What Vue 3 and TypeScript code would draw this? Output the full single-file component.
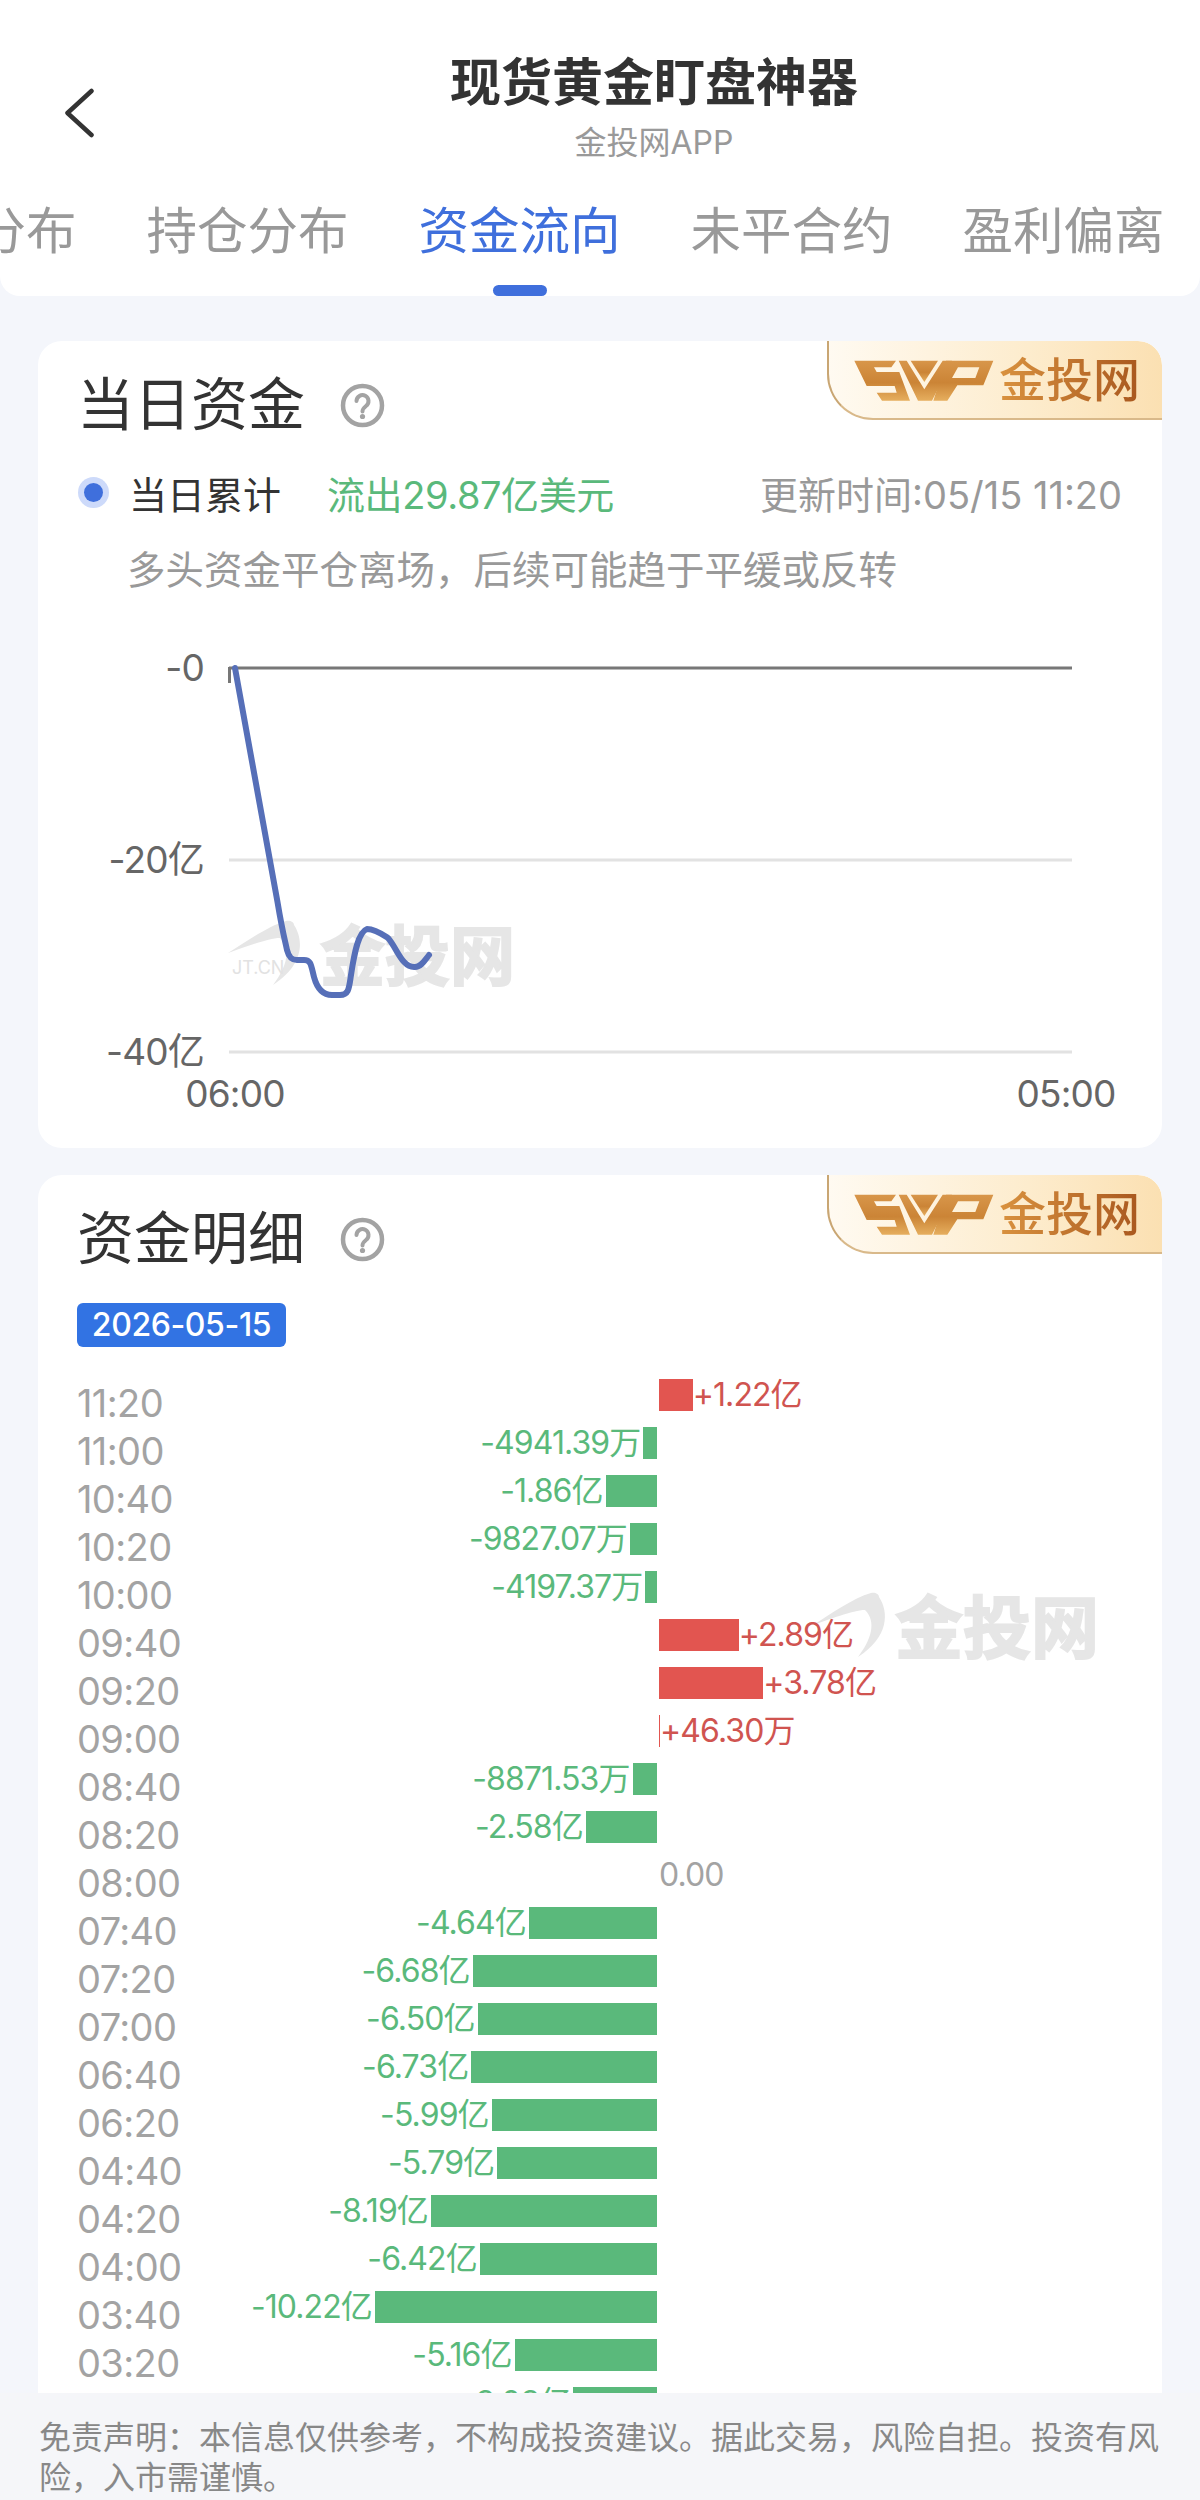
<template>
  <div class="page">
    <header class="top">
      <div class="nav">
        <svg class="nav__back" width="30" height="50" viewBox="0 0 30 50" fill="none">
          <path d="M27 3 L3 25 L27 47" stroke="#333" stroke-width="4.5" stroke-linecap="round" stroke-linejoin="round" />
        </svg>
        <div class="nav__center">
          <h1 class="nav__title">现货黄金盯盘神器</h1>
          <p class="nav__sub">金投网APP</p>
        </div>
      </div>
      <div class="tabs">
        <div v-for="tab in tabs" :key="tab" class="tab" :class="{ 'tab--active': tab === activeTab }">
          <span class="tab__text">{{ tab }}</span>
          <i class="tab__bar"></i>
        </div>
      </div>
    </header>

    <main class="scroller">
      <section class="card card--today">
        <div class="card__head">
          <h2 class="card__title">当日资金</h2>
          <svg class="help" width="45" height="45" viewBox="0 0 45 45" fill="none">
            <circle cx="22.5" cy="22.5" r="19.5" stroke="#a3a3a3" stroke-width="4.5" />
            <path d="M16.5 18a6 6 0 1 1 9.5 5c-2.3 1.8-3.5 2.8-3.5 5.5" stroke="#a3a3a3" stroke-width="4" stroke-linecap="round" />
            <circle cx="22.5" cy="33.5" r="2.6" fill="#a3a3a3" />
          </svg>
        </div>
        <div class="badge">
          <svg class="badge__logo" width="150" height="60" viewBox="0 0 450 180">
            <defs>
              <linearGradient id="svp" x1="0" y1="0" x2="0" y2="1">
                <stop offset="0" stop-color="#d8964a" />
                <stop offset="0.55" stop-color="#cb8436" />
                <stop offset="1" stop-color="#e6ae5e" />
              </linearGradient>
            </defs>
            <path fill="url(#svp)" d="M25 32H150L136 52H84L92 66H160L192 152H108L92 128H152L146 108H62Z" />
            <path fill="url(#svp)" d="M158 32H182L235 118L290 32H318L258 152H216Z" />
            <path fill="url(#svp)" d="M194 32H276L235 96Z" />
            <path fill="url(#svp)" fill-rule="evenodd" d="M300 32H442L412 106H334L304 152H262ZM336 52L318 84H388L400 52Z" />
          </svg>
          <span class="badge__text">金投网</span>
        </div>
        <div class="legend">
          <span class="legend__radio"><i></i></span>
          <span class="legend__name">当日累计</span>
          <span class="legend__flow">流出29.87亿美元</span>
          <span class="legend__time">更新时间:05/15 11:20</span>
        </div>
        <p class="desc">{{ descText }}</p>
        <svg class="chart" width="1124" height="553" viewBox="38 595 1124 553">
          <g fill="#e6e6e6">
            <path d="M228 953C246 942 268 926 286 921C290 920 294 922 294 925C304 940 304 965 273 985C286 968 292 950 280 938C268 938 243 948 228 953Z" />
            <text x="232" y="974" font-size="18" fill="#e2e2e2">JT.CN</text>
            <text x="320" y="980" font-size="65" font-weight="700" stroke="#e6e6e6" stroke-width="2">金投网</text>
          </g>
          <line
            v-for="g in yTicks"
            :key="g.label"
            x1="229"
            x2="1072"
            :y1="g.y"
            :y2="g.y"
            :stroke="g.y === 668 ? '#777' : '#e2e2e2'"
            stroke-width="3"
          />
          <line x1="229.5" x2="229.5" y1="667" y2="683" stroke="#777" stroke-width="3" />
          <text v-for="g in yTicks" :key="g.label" class="chart__label" x="204" :y="g.y + 13" text-anchor="end">{{ g.label }}</text>
          <text class="chart__label" x="235" y="1107" text-anchor="middle">06:00</text>
          <text class="chart__label" x="1066" y="1107" text-anchor="middle">05:00</text>
          <path :d="linePath" fill="none" stroke="#566fb8" stroke-width="6" stroke-linecap="round" stroke-linejoin="round" />
        </svg>
      </section>

      <section class="card card--detail">
        <div class="card__head">
          <h2 class="card__title">资金明细</h2>
          <svg class="help" width="45" height="45" viewBox="0 0 45 45" fill="none">
            <circle cx="22.5" cy="22.5" r="19.5" stroke="#a3a3a3" stroke-width="4.5" />
            <path d="M16.5 18a6 6 0 1 1 9.5 5c-2.3 1.8-3.5 2.8-3.5 5.5" stroke="#a3a3a3" stroke-width="4" stroke-linecap="round" />
            <circle cx="22.5" cy="33.5" r="2.6" fill="#a3a3a3" />
          </svg>
        </div>
        <div class="badge">
          <svg class="badge__logo" width="150" height="60" viewBox="0 0 450 180">
            <path fill="url(#svp)" d="M25 32H150L136 52H84L92 66H160L192 152H108L92 128H152L146 108H62Z" />
            <path fill="url(#svp)" d="M158 32H182L235 118L290 32H318L258 152H216Z" />
            <path fill="url(#svp)" d="M194 32H276L235 96Z" />
            <path fill="url(#svp)" fill-rule="evenodd" d="M300 32H442L412 106H334L304 152H262ZM336 52L318 84H388L400 52Z" />
          </svg>
          <span class="badge__text">金投网</span>
        </div>
        <span class="date-chip">2026-05-15</span>

        <svg class="watermark" width="300" height="84" viewBox="0 0 300 84">
          <g fill="#e6e6e6">
            <path d="M8 33C26 22 48 6 66 1C70 0 74 2 74 5C84 20 84 45 53 65C66 48 72 30 60 18C48 18 23 28 8 33Z" />
            <text x="90" y="61" font-size="68" font-weight="700" stroke="#e6e6e6" stroke-width="2">金投网</text>
          </g>
        </svg>

        <div class="rows">
          <div v-for="row in rows" :key="row.time" class="row">
            <span class="row__time">{{ row.time }}</span>
            <div class="row__neg">
              <template v-if="row.amount < 0">
                <span class="row__value row__value--down">{{ row.label }}</span>
                <i class="row__bar row__bar--down" :style="{ width: barWidth(row.amount) }"></i>
              </template>
            </div>
            <div class="row__pos">
              <template v-if="row.amount > 0">
                <i class="row__bar row__bar--up" :style="{ width: barWidth(row.amount) }"></i>
                <span class="row__value row__value--up">{{ row.label }}</span>
              </template>
              <span v-else-if="row.amount === 0" class="row__value row__value--zero">{{ row.label }}</span>
            </div>
          </div>
        </div>
      </section>
    </main>

    <footer class="disclaimer">{{ disclaimerText }}</footer>
  </div>
</template>

<script setup lang="ts">
interface FlowRow {
  time: string
  label: string
  amount: number
}

const tabs = ['多空分布', '持仓分布', '资金流向', '未平合约', '盈利偏离']
const activeTab = '资金流向'

// full-width punctuation, written as escapes so it can't get normalised
const descText = '多头资金平仓离场\uFF0C后续可能趋于平缓或反转'
const disclaimerText =
  '免责声明\uFF1A本信息仅供参考\uFF0C不构成投资建议。据此交易\uFF0C风险自担。投资有风险\uFF0C入市需谨慎。'

const yTicks = [
  { label: '-0', y: 668 },
  { label: '-20亿', y: 860 },
  { label: '-40亿', y: 1052 },
]

const linePath =
  'M235 668L277.5 902C283 935 285 940 287 950C289 958 292 960 297 960L304 960C311 960 311 965 314 977C317 988 322 995 332 995L340 995C349 995 349 988 351 975C354 955 358 932 367 929C375 929 382 934 388 938C397 948 402 968 415 967C421 967 425 960 429 955'

const rows: FlowRow[] = [
  { time: '11:20', label: '+1.22亿', amount: 1.22 },
  { time: '11:00', label: '-4941.39万', amount: -0.494 },
  { time: '10:40', label: '-1.86亿', amount: -1.86 },
  { time: '10:20', label: '-9827.07万', amount: -0.983 },
  { time: '10:00', label: '-4197.37万', amount: -0.42 },
  { time: '09:40', label: '+2.89亿', amount: 2.89 },
  { time: '09:20', label: '+3.78亿', amount: 3.78 },
  { time: '09:00', label: '+46.30万', amount: 0.005 },
  { time: '08:40', label: '-8871.53万', amount: -0.887 },
  { time: '08:20', label: '-2.58亿', amount: -2.58 },
  { time: '08:00', label: '0.00', amount: 0 },
  { time: '07:40', label: '-4.64亿', amount: -4.64 },
  { time: '07:20', label: '-6.68亿', amount: -6.68 },
  { time: '07:00', label: '-6.50亿', amount: -6.5 },
  { time: '06:40', label: '-6.73亿', amount: -6.73 },
  { time: '06:20', label: '-5.99亿', amount: -5.99 },
  { time: '04:40', label: '-5.79亿', amount: -5.79 },
  { time: '04:20', label: '-8.19亿', amount: -8.19 },
  { time: '04:00', label: '-6.42亿', amount: -6.42 },
  { time: '03:40', label: '-10.22亿', amount: -10.22 },
  { time: '03:20', label: '-5.16亿', amount: -5.16 },
  { time: '03:00', label: '-3.03亿', amount: -3.03 },
]

// 27.6px per 亿, smallest bar stays visible as a hairline
function barWidth(amount: number): string {
  return `${Math.max(Math.abs(amount) * 27.6, 1)}px`
}
</script>

<style scoped>
.page {
  width: 1200px;
  height: 2500px;
  display: flex;
  flex-direction: column;
  overflow: hidden;
  background: #f4f6fb;
  font-family: Inter, "Noto Sans CJK SC", sans-serif;
  color: #333;
}

.top {
  height: 296px;
  flex: none;
  background: #fff;
  border-radius: 0 0 20px 20px;
  overflow: hidden;
}

.nav {
  display: flex;
  padding-top: 52px;
  height: 144px;
  box-sizing: border-box;
}

.nav__back {
  width: 108px;
  flex: none;
  padding: 36px 0 0 51px;
  box-sizing: border-box;
  height: 86px;
}

.nav__center {
  flex: 1;
  text-align: center;
}

.nav__title {
  margin: 0;
  font-size: 51px;
  line-height: 62px;
  font-weight: 700;
  color: #333;
}

.nav__sub {
  margin: 9px 0 0;
  font-size: 32px;
  line-height: 40px;
  color: #999;
}

.tabs {
  display: flex;
  gap: 71px;
  margin-left: -125px;
  margin-top: 52px;
}

.tab {
  flex: none;
  width: 201px;
  display: flex;
  flex-direction: column;
  align-items: center;
}

.tab__text {
  font-size: 50.5px;
  line-height: 70px;
  color: #999;
  white-space: nowrap;
}

.tab__bar {
  width: 54px;
  height: 11px;
  margin-top: 19px;
  border-radius: 6px;
}

.tab--active .tab__text {
  color: #3f6fdc;
}

.tab--active .tab__bar {
  background: #3f6fdc;
}

.scroller {
  flex: 1;
  min-height: 0;
  overflow: hidden;
  padding: 45px 38px 0;
}

.card {
  position: relative;
  background: #fff;
  border-radius: 24px;
  overflow: hidden;
}

.card--today {
  height: 807px;
  margin-bottom: 27px;
}

.card__head {
  display: flex;
  align-items: center;
  padding: 30px 0 0 39px;
}

.card__title {
  margin: 0;
  font-size: 57px;
  line-height: 68px;
  font-weight: 400;
  color: #333;
}

.help {
  margin-left: 35px;
}

.badge {
  position: absolute;
  top: 0;
  right: 0;
  width: 335px;
  height: 79px;
  box-sizing: border-box;
  display: flex;
  align-items: center;
  padding-left: 17px;
  border-left: 2px solid #c9a673;
  border-bottom: 2px solid #d9b98a;
  border-radius: 0 24px 0 46px;
  background: linear-gradient(90deg, #fffaf1 0%, #fdeccd 60%, #fbe0b2 100%);
}

.badge__logo {
  flex: none;
}

.badge__text {
  margin-left: 3px;
  font-size: 47px;
  line-height: 60px;
  font-weight: 500;
  background: linear-gradient(90deg, #d9923f, #a9581f);
  -webkit-background-clip: text;
  background-clip: text;
  color: transparent;
}

.legend {
  display: flex;
  align-items: center;
  height: 50px;
  margin-top: 28px;
  padding: 0 40px;
  font-size: 38px;
  white-space: nowrap;
}

.legend__radio {
  width: 31px;
  height: 31px;
  flex: none;
  display: flex;
  align-items: center;
  justify-content: center;
  border-radius: 50%;
  background: #cddafa;
}

.legend__radio i {
  width: 19px;
  height: 19px;
  border-radius: 50%;
  background: #3f6fdc;
}

.legend__name {
  margin-left: 20px;
  color: #333;
}

.legend__flow {
  margin-left: 46px;
  color: #5ab97b;
  letter-spacing: -0.4px;
}

.legend__time {
  margin-left: auto;
  color: #999;
}

.desc {
  margin: 28px 0 0 89px;
  font-size: 38.5px;
  line-height: 50px;
  color: #999;
}

.chart {
  display: block;
}

.chart__label {
  font-size: 37px;
  letter-spacing: -0.8px;
  fill: #666;
}

.card--detail {
  min-height: 1300px;
}

.date-chip {
  display: block;
  width: 209px;
  height: 44px;
  margin: 30px 0 0 39px;
  border-radius: 6px;
  background: #3273e3;
  color: #fff;
  font-size: 32px;
  line-height: 44px;
  font-weight: 500;
  text-align: center;
  letter-spacing: -0.4px;
}

.watermark {
  position: absolute;
  top: 417px;
  left: 767px;
}

.rows {
  position: relative;
  margin-top: 32px;
}

.row {
  display: grid;
  grid-template-columns: 120px 460px 1fr;
  column-gap: 0;
  height: 48px;
  padding-left: 39px;
}

.row__time {
  padding-top: 1px;
  font-size: 38px;
  line-height: 46px;
  color: #a3a3a3;
  letter-spacing: -0.6px;
}

.row__neg,
.row__pos {
  display: flex;
  height: 32px;
  align-items: center;
}

.row__neg {
  justify-content: flex-end;
}

.row__pos {
  margin-left: 2px;
}

.row__bar {
  height: 32px;
  flex: none;
}

.row__bar--down {
  background: #5ab97b;
}

.row__bar--up {
  background: #e25550;
}

.row__value {
  font-size: 32px;
  line-height: 32px;
  letter-spacing: -0.9px;
  white-space: nowrap;
}

.row__value--down {
  margin-right: 3px;
  color: #5ab97b;
}

.row__value--up {
  color: #d05450;
}

.row__value--zero {
  color: #a3a3a3;
}

.disclaimer {
  flex: none;
  height: 107px;
  box-sizing: border-box;
  padding: 25px 38px 0 39px;
  background: #f5f6f9;
  font-size: 32px;
  line-height: 40px;
  color: #888;
}
</style>

<style>
html,
body {
  margin: 0;
  background: #f4f6fb;
}
</style>
